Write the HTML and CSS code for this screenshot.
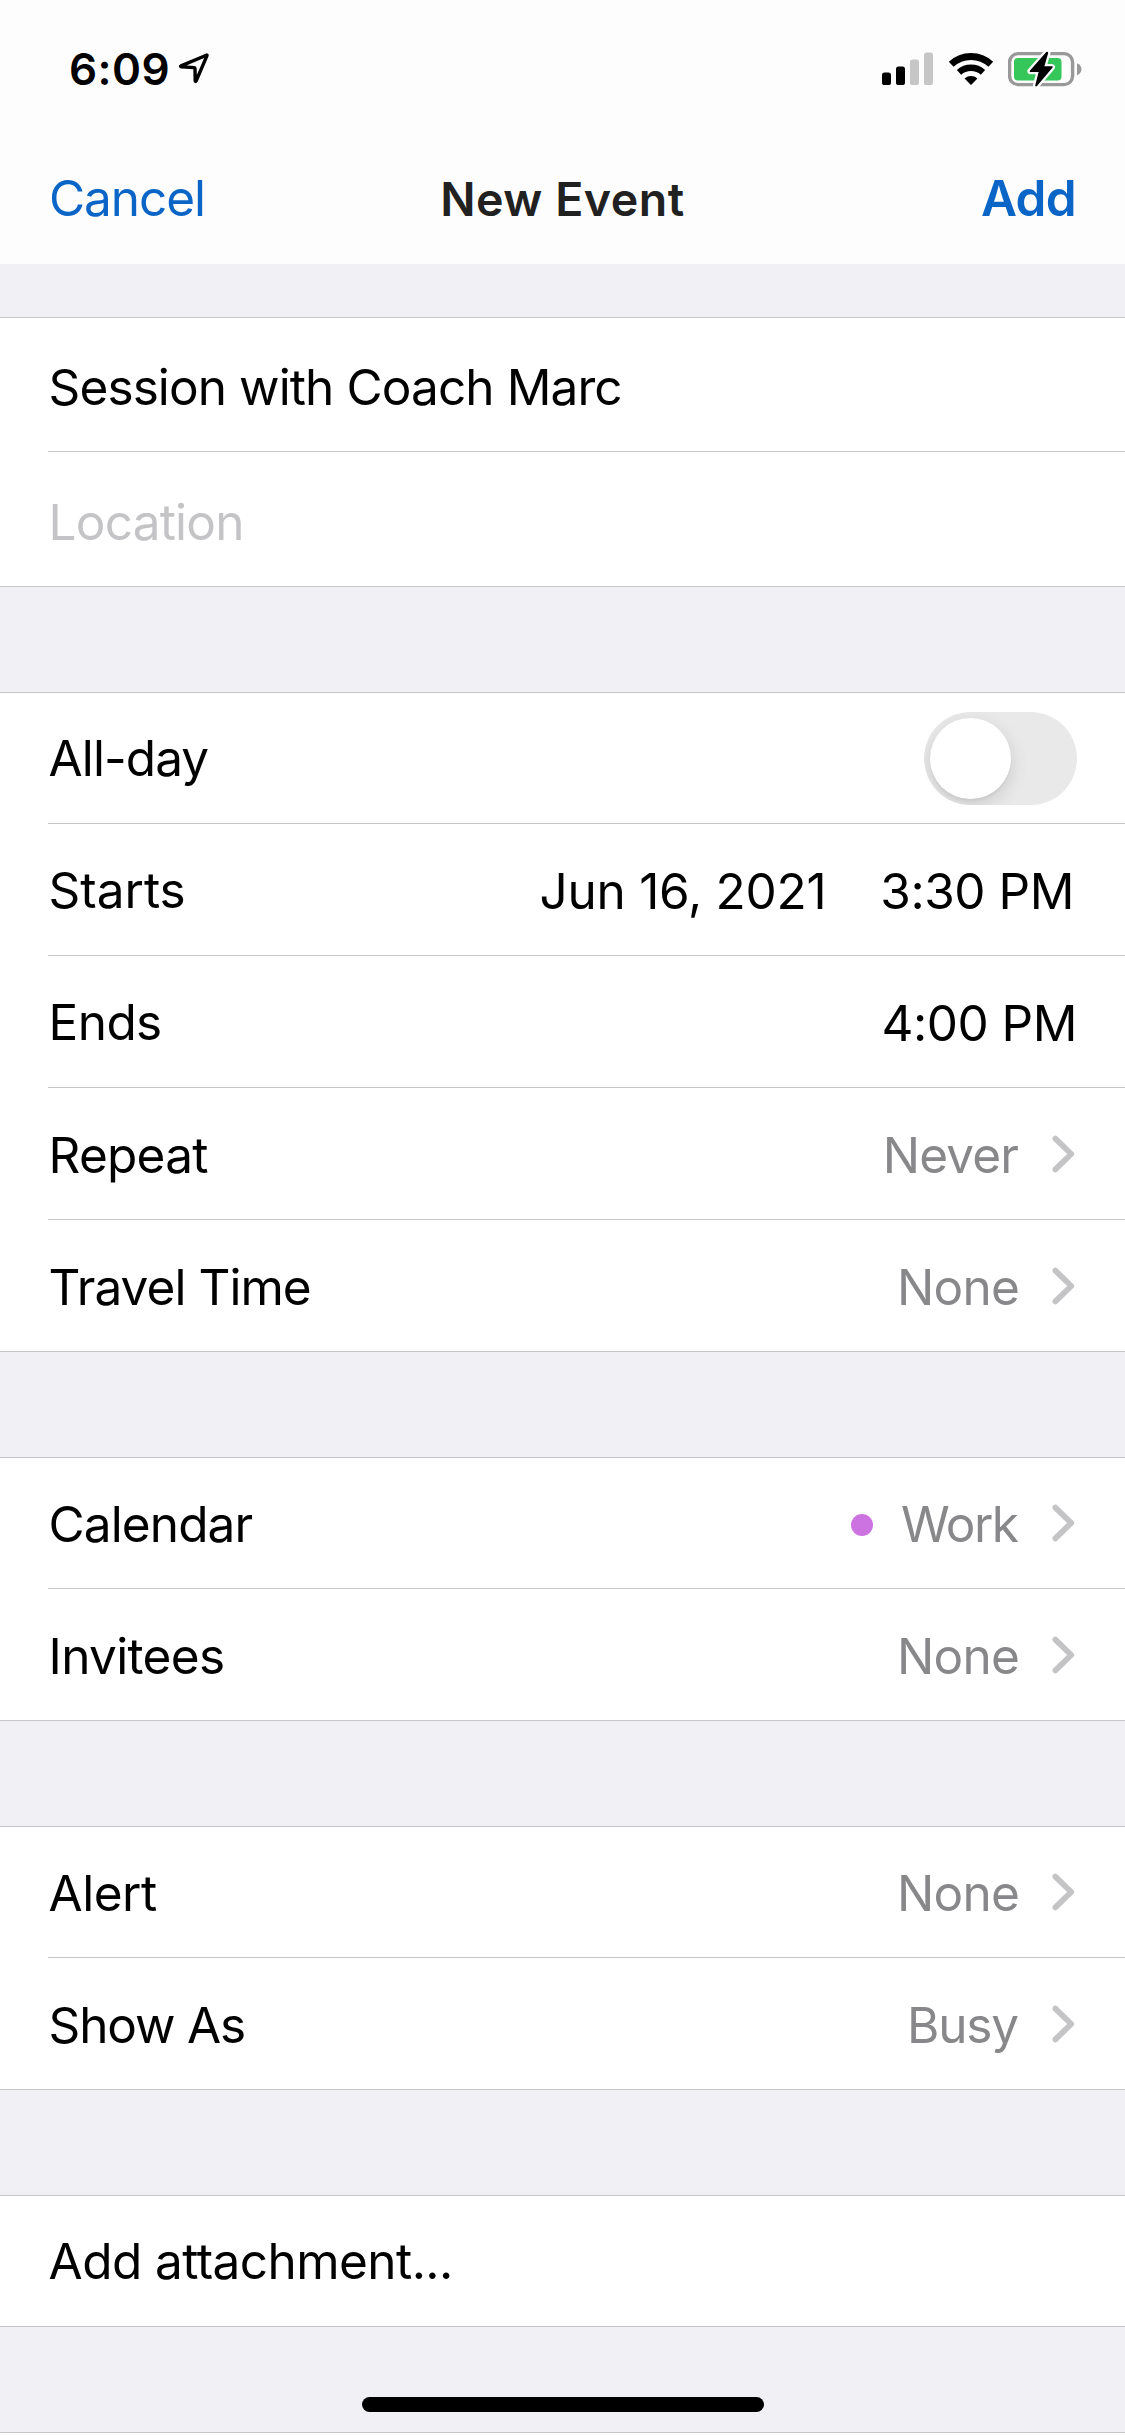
FILE: index.html
```html
<!DOCTYPE html>
<html lang="en">
<head>
<meta charset="utf-8">
<title>New Event</title>
<link rel="stylesheet" href="styles.css">
</head>
<body>
<svg class="defs" width="0" height="0" aria-hidden="true">
  <symbol id="chevron" viewBox="0 0 25 38"><path d="M3.4 3.6 L19.2 19 L3.4 34.4" fill="none" stroke="#c4c4c6" stroke-width="5.8" stroke-linecap="round" stroke-linejoin="round"/></symbol>
</svg>
<header class="header">
  <div class="status">
    <div class="status-left">
      <span class="clock">6:09</span>
      <svg class="location" width="32" height="32" viewBox="0 0 32 32"><path d="M29 2.6 Q29.3 1.8 28.4 2.2 L3 12.9 Q2 13.5 3.2 13.7 L16.2 14.6 Q17 14.7 17 15.5 L17.2 27.8 Q17.5 29 18.1 28 Z" fill="none" stroke="#000" stroke-width="3.4" stroke-linejoin="round"/></svg>
    </div>
    <div class="status-right">
      <svg class="signal" width="52" height="34" viewBox="0 0 52 34">
        <rect x="0" y="20.5" width="9" height="12.5" rx="2.6"/>
        <rect x="14" y="14.5" width="9" height="18.5" rx="2.6"/>
        <rect x="28" y="7.5" width="9" height="25.5" rx="2.6" fill="#c6c6c6"/>
        <rect x="42" y="0.5" width="9" height="32.5" rx="2.6" fill="#c6c6c6"/>
      </svg>
      <svg class="wifi" width="46" height="34" viewBox="0 0 46 34">
        <path d="M3.2 12.2 A29 29 0 0 1 42.8 12.2" fill="none" stroke="#000" stroke-width="7"/>
        <path d="M11 20.4 A18 18 0 0 1 35 20.4" fill="none" stroke="#000" stroke-width="6.4"/>
        <path d="M16.6 26.4 A9.5 9.5 0 0 1 29.4 26.4 L23.6 32.4 Q23 33 22.4 32.4 Z"/>
      </svg>
      <svg class="battery" width="76" height="38" viewBox="0 0 76 38">
        <rect x="1.6" y="3.6" width="63" height="31" rx="8.5" fill="none" stroke="#999" stroke-width="3.4"/>
        <path d="M69 13.2 Q73.4 15 73.4 19.2 Q73.4 23.4 69 25.2 Z" fill="#999"/>
        <rect x="6" y="8" width="47.5" height="22.6" rx="4" fill="#35c759"/>
        <path d="M38.3 2 L21.8 20.8 Q21.2 22 22.6 22 L30.6 22 L27.2 35.4 Q27.6 37 29 36 L44.6 17.6 Q45.2 16.2 43.8 16.2 L36.4 16.2 L40.2 3 Q39.8 1.2 38.3 2 Z" stroke="#fdfdfd" stroke-width="4.6" paint-order="stroke"/>
      </svg>
    </div>
  </div>
  <nav class="nav">
    <a class="cancel">Cancel</a>
    <h1 class="title">New Event</h1>
    <a class="add">Add</a>
  </nav>
</header>
<main class="form">
  <section class="group">
    <div class="row field"><span class="label t-session">Session with Coach Marc</span></div>
    <div class="row field"><span class="label placeholder">Location</span></div>
  </section>
  <section class="group">
    <div class="row"><span class="label t-allday">All-day</span><span class="toggle"><span class="knob"></span></span></div>
    <div class="row date"><span class="label t-starts">Starts</span><span class="times"><span class="time t-day">Jun 16, 2021</span><span class="time t-start">3:30 PM</span></span></div>
    <div class="row date"><span class="label t-ends">Ends</span><span class="time t-end">4:00 PM</span></div>
    <div class="row link"><span class="label t-repeat">Repeat</span><span class="value t-never">Never</span><svg class="chevron"><use href="#chevron"/></svg></div>
    <div class="row link"><span class="label t-travel">Travel Time</span><span class="value t-none">None</span><svg class="chevron"><use href="#chevron"/></svg></div>
  </section>
  <section class="group">
    <div class="row link"><span class="label t-calendar">Calendar</span><span class="dot"></span><span class="value t-work">Work</span><svg class="chevron"><use href="#chevron"/></svg></div>
    <div class="row link"><span class="label t-invitees">Invitees</span><span class="value t-none">None</span><svg class="chevron"><use href="#chevron"/></svg></div>
  </section>
  <section class="group">
    <div class="row link"><span class="label t-alert">Alert</span><span class="value t-none">None</span><svg class="chevron"><use href="#chevron"/></svg></div>
    <div class="row link"><span class="label t-show">Show As</span><span class="value t-busy">Busy</span><svg class="chevron"><use href="#chevron"/></svg></div>
  </section>
  <section class="group">
    <div class="row"><span class="label t-attach">Add attachment...</span></div>
  </section>
</main>
<footer class="footer"><span class="home"></span></footer>
</body>
</html>
```

FILE: styles.css
```css
* { box-sizing: border-box; }

body {
  margin: 0;
  width: 1125px;
  height: 2436px;
  overflow: hidden;
  display: flex;
  flex-direction: column;
  background: #fff;
  color: #000;
  font: 400 49.5px/60px Inter, "Liberation Sans", sans-serif;
}

.defs { display: none; }
svg { display: block; flex: none; }

/* Status bar and navigation */
.header { height: 264px; background: #fdfdfd; }

.status {
  height: 138px;
  padding: 0 41px 0 69px;
  display: flex;
  align-items: center;
  justify-content: space-between;
}
.status-left, .status-right { display: flex; align-items: center; }
.clock { font-size: 44px; font-weight: 600; letter-spacing: 0.4px; }
.location { margin-left: 8px; }
.wifi { margin-left: 14px; }
.battery { margin-left: 14px; }

.nav {
  height: 120px;
  padding: 0 49px 0 49px;
  display: grid;
  grid-template-columns: 1fr auto 1fr;
  align-items: baseline;
  align-content: center;
}
.cancel, .add { color: #0b65c6; }
.cancel { letter-spacing: -1.05px; }
.add { font-weight: 600; letter-spacing: -0.69px; text-align: right; }
.title { margin: 0; color: #212121; font-size: 46.5px; font-weight: 600; letter-spacing: 0.54px; }

/* Grouped form */
.form {
  padding: 53px 0 105px;
  display: flex;
  flex-direction: column;
  gap: 105px;
  background: #f0f0f5;
}

.group {
  padding-left: 48px;
  background: #fff;
  border-top: 1px solid #c6c6c8;
  border-bottom: 1px solid #c6c6c8;
}

.row {
  height: 132px;
  padding-right: 48px;
  display: flex;
  align-items: center;
  border-top: 1px solid #c6c6c8;
}
.row:first-child { height: 130px; border-top: 0; }
.row.field { height: 135px; padding-top: 5px; }
.row.field:first-child { height: 133px; padding-top: 4px; }

.label { flex: 1; padding-left: 0.6px; letter-spacing: var(--track); }
.placeholder { --track: -0.78px; color: #c4c4c6; }
.date .label { padding-top: 1px; }
.date .time { padding-top: 2px; }
.link .label, .link .value { padding-top: 3px; }
.link:first-child .label, .link:first-child .value { padding-top: 1px; }

.time { letter-spacing: var(--track); }
.times { display: flex; gap: 54px; margin-right: 3px; }
.value {
  color: #88888b;
  letter-spacing: var(--track);
  margin-right: calc(33px - var(--track));
}
.chevron { width: 25px; height: 38px; }

.dot {
  width: 22px;
  height: 22px;
  margin: 3px 28px 0 0;
  border-radius: 50%;
  background: #cc73e1;
}

.toggle {
  width: 153px;
  height: 93px;
  padding: 6px;
  border-radius: 47px;
  background: #e9e9ea;
  overflow: hidden;
}
.knob {
  display: block;
  width: 81px;
  height: 81px;
  border-radius: 50%;
  background: #fff;
  box-shadow: 0 6px 18px rgba(0, 0, 0, 0.13), 0 2px 3px rgba(0, 0, 0, 0.05);
}

/* Optical tracking for each string */
.t-session { --track: -0.9px; }
.t-allday { --track: -0.92px; }
.t-starts { --track: -0.02px; }
.t-ends { --track: -0.6px; }
.t-repeat { --track: -0.77px; }
.t-travel { --track: -0.95px; }
.t-day { --track: -0.25px; }
.t-start { --track: -0.46px; }
.t-end { --track: -0.48px; }
.t-never { --track: -0.79px; }
.value.t-none { --track: -0.76px; margin-right: 33px; }
.t-work { --track: -1.5px; }
.t-busy { --track: -1.2px; }
.t-calendar { --track: -0.9px; }
.t-invitees { --track: -0.68px; }
.t-alert { --track: -0.5px; }
.t-show { --track: -1.16px; }
.t-attach { --track: -0.56px; }

.footer {
  height: 4px;
  position: relative;
  border-top: 1px solid #c6c6c8;
  background: #fff;
}
.home {
  position: absolute;
  left: 362px;
  bottom: 24px;
  width: 402px;
  height: 15px;
  border-radius: 8px;
  background: #000;
}
```
